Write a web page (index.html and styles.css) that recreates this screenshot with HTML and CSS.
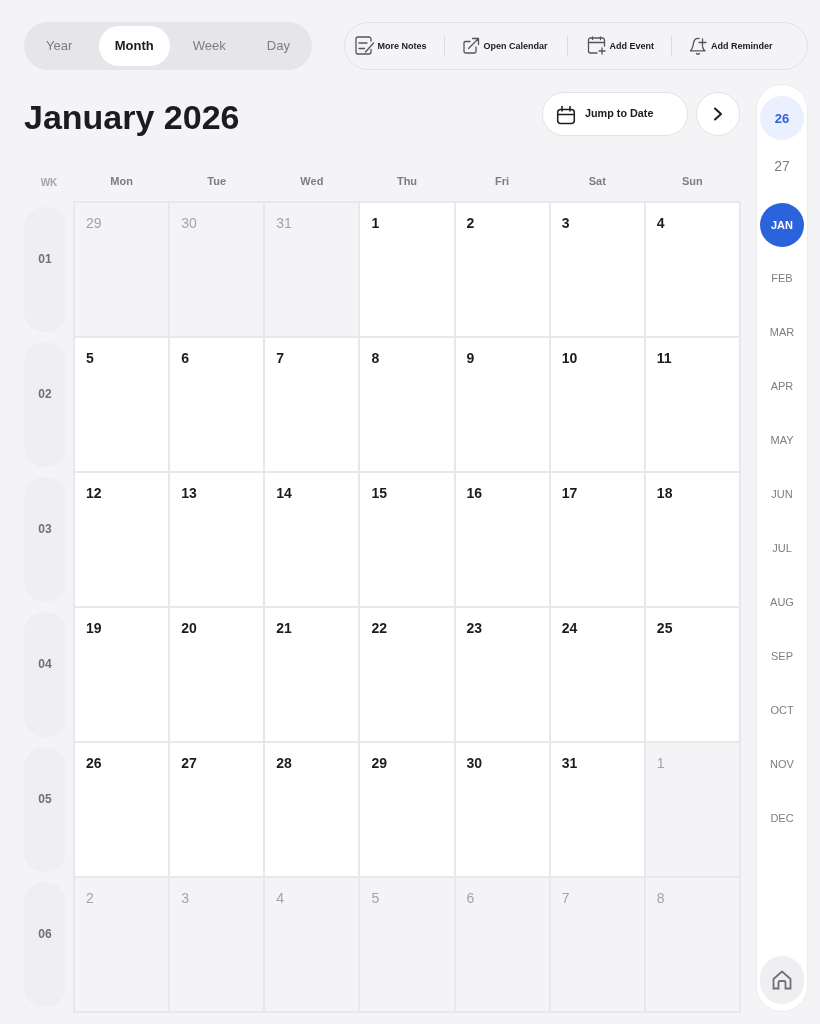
FILE: index.html
```html
<!DOCTYPE html>
<html lang="en">
<head>
<meta charset="utf-8">
<title>January 2026</title>
<link rel="stylesheet" href="styles.css">
</head>
<body>
<div class="page">
  <header class="topbar">
    <nav class="views">
      <span class="view view-year">Year</span>
      <span class="view active">Month</span>
      <span class="view view-week">Week</span>
      <span class="view">Day</span>
    </nav>
    <div class="tools">
      <a class="tool tool-notes">
        <svg class="tool-icon" viewBox="0 0 20 20"><path d="M16 5V3A2 2 0 0 0 14 1H3A2 2 0 0 0 1 3V16A2 2 0 0 0 3 18H14A2 2 0 0 0 16 16V13.500"/><path d="M4 7H12M4 12.500H9.500"/><path d="M10.500 16L18.500 7"/></svg>
        <span>More Notes</span>
      </a>
      <i class="sep"></i>
      <a class="tool tool-open">
        <svg class="tool-icon" viewBox="0 0 20 20"><path d="M9 5.500H4.500A1.500 1.500 0 0 0 3 7V15.500A1.500 1.500 0 0 0 4.500 17H13.500A1.500 1.500 0 0 0 15 15.500V11"/><path d="M7.500 12.500L17.500 2.500M11.500 2.500H17.500V8.500"/></svg>
        <span>Open Calendar</span>
      </a>
      <i class="sep"></i>
      <a class="tool tool-event">
        <svg class="tool-icon" viewBox="0 0 20 20"><path d="M17.500 10V4A2 2 0 0 0 15.500 2H3.500A2 2 0 0 0 1.500 4V15A2 2 0 0 0 3.500 17H10"/><path d="M1.500 6.500H17.500M5.500 0.800V3.500M13.500 0.800V3.500M15 12V18M12 15H18"/></svg>
        <span>Add Event</span>
      </a>
      <i class="sep"></i>
      <a class="tool tool-reminder">
        <svg class="tool-icon" viewBox="0 0 20 20"><path d="M11 2.500C7.500 2 6 4.500 5.500 7C5 10.500 4.500 13 2.500 14.800H17C15.800 14 15 12.800 14.600 11"/><path d="M8.500 17.500C9.300 18.300 10.700 18.300 11.500 17.500"/><path d="M14.500 3V10M11 6.500H18"/></svg>
        <span>Add Reminder</span>
      </a>
    </div>
  </header>

  <div class="body">
    <main class="main">
      <div class="title-row">
        <h1>January 2026</h1>
        <div class="title-actions">
          <button class="jump">
            <svg class="jump-icon" viewBox="0 0 20 20"><rect x="1.700" y="5.500" width="16.600" height="14" rx="3"/><path d="M1.700 10.500H18.300M6 2.500V7M14 2.500V7"/></svg>
            <span>Jump to Date</span>
          </button>
          <button class="next">
            <svg viewBox="0 0 12 16"><path d="M3 2.500L9 8L3 13.500"/></svg>
          </button>
        </div>
      </div>

      <div class="cal">
        <div class="weeks">
          <div class="wk-head">WK</div>
          <div class="wk">01</div>
          <div class="wk">02</div>
          <div class="wk">03</div>
          <div class="wk">04</div>
          <div class="wk">05</div>
          <div class="wk">06</div>
        </div>
        <div class="month">
          <div class="dow"><span>Mon</span><span>Tue</span><span>Wed</span><span>Thu</span><span>Fri</span><span>Sat</span><span>Sun</span></div>
          <div class="grid">
            <div class="day out">29</div><div class="day out">30</div><div class="day out">31</div><div class="day">1</div><div class="day">2</div><div class="day">3</div><div class="day">4</div>
            <div class="day">5</div><div class="day">6</div><div class="day">7</div><div class="day">8</div><div class="day">9</div><div class="day">10</div><div class="day">11</div>
            <div class="day">12</div><div class="day">13</div><div class="day">14</div><div class="day">15</div><div class="day">16</div><div class="day">17</div><div class="day">18</div>
            <div class="day">19</div><div class="day">20</div><div class="day">21</div><div class="day">22</div><div class="day">23</div><div class="day">24</div><div class="day">25</div>
            <div class="day">26</div><div class="day">27</div><div class="day">28</div><div class="day">29</div><div class="day">30</div><div class="day">31</div><div class="day out">1</div>
            <div class="day out">2</div><div class="day out">3</div><div class="day out">4</div><div class="day out">5</div><div class="day out">6</div><div class="day out">7</div><div class="day out">8</div>
          </div>
        </div>
      </div>
    </main>

    <aside class="rail">
      <div class="years">
        <div class="pip year-on">26</div>
        <div class="pip year">27</div>
      </div>
      <div class="months">
        <div class="pip mon-on">JAN</div>
        <div class="pip">FEB</div>
        <div class="pip">MAR</div>
        <div class="pip">APR</div>
        <div class="pip">MAY</div>
        <div class="pip">JUN</div>
        <div class="pip">JUL</div>
        <div class="pip">AUG</div>
        <div class="pip">SEP</div>
        <div class="pip">OCT</div>
        <div class="pip">NOV</div>
        <div class="pip">DEC</div>
      </div>
      <button class="home">
        <svg viewBox="0 0 20 20"><path d="M1.500 9L10 1.500L18.500 9V18.500H13.500V12.500Q13.500 11 12 11H8Q6.500 11 6.500 12.500V18.500H1.500Z"/></svg>
      </button>
    </aside>
  </div>
</div>
</body>
</html>
```
FILE: styles.css
```css
* { box-sizing: border-box; }
html, body { margin: 0; padding: 0; }
body { background: #f4f4f7; font-family: "Liberation Sans", Arial, sans-serif; color: #1c1c1e; }
.page { width: 820px; height: 1024px; padding: 22px 12px 12px 24px; display: flex; flex-direction: column; gap: 14px; overflow: hidden; will-change: transform; }

.topbar { display: flex; justify-content: space-between; height: 48px; flex: none; }
.views { width: 288px; height: 48px; background: #e5e5ea; border-radius: 24px; display: flex; align-items: center; padding: 4px 6px; }
.view { height: 40px; display: flex; align-items: center; padding: 0 16px 1px; font-size: 13px; color: #7d7d82; border-radius: 20px; }
.view-year { margin-right: 10.500px; }
.view-week { margin: 0 9px 0 7px; }
.view.active { background: #fff; color: #1c1c1e; font-weight: 700; }

.tools { width: 464px; height: 48px; border: 1.500px solid #e0e0e5; border-radius: 24px; display: flex; align-items: center; padding-left: 9.500px; }
.tool { display: flex; align-items: center; gap: 3px; font-size: 9px; font-weight: 700; color: #1c1c1e; white-space: nowrap; }
.tool-icon { width: 20px; height: 20px; fill: none; stroke: #555558; stroke-width: 1.300; stroke-linecap: round; stroke-linejoin: round; flex: none; overflow: visible; }
.sep { width: 1px; height: 20px; background: #dcdce0; flex: none; }
.tool-notes { margin-right: 17px; }
.tool-open { margin: 0 19px 0 16px; }
.tool-event { margin: 0 17px 0 19px; }
.tool-reminder { margin-left: 16px; }

.body { flex: 1; display: flex; gap: 15px; min-height: 0; }
.main { width: 717px; display: flex; flex-direction: column; }
.title-row { height: 71px; flex: none; display: flex; justify-content: space-between; padding: 8px 1px 0 0; }
h1 { margin: 1px 0 0; font-size: 34px; line-height: 48px; font-weight: 700; color: #1c1c1e; }
.title-actions { display: flex; gap: 8px; height: 44px; }
button { font-family: inherit; padding: 0; }
.jump { width: 146px; height: 44px; background: #fff; border: 1px solid #e2e2e6; border-radius: 22px; display: flex; align-items: center; gap: 9px; padding-left: 13px; font-size: 10.800px; font-weight: 700; color: #1c1c1e; }
.jump-icon { width: 20px; height: 20px; fill: none; stroke: #1c1c1e; stroke-width: 1.500; stroke-linecap: round; stroke-linejoin: round; overflow: visible; }
.jump span { margin-bottom: 2px; }
.next { width: 44px; height: 44px; background: #fff; border: 1px solid #e2e2e6; border-radius: 22px; display: flex; align-items: center; justify-content: center; }
.next svg { width: 12px; height: 16px; fill: none; stroke: #1c1c1e; stroke-width: 2; stroke-linecap: round; stroke-linejoin: round; }

.cal { display: flex; gap: 7px; flex: none; }
.weeks { width: 42px; display: flex; flex-direction: column; }
.wk-head { height: 52px; padding: 21px 0 0 8px; flex: none; text-align: center; font-size: 10px; line-height: 14px; font-weight: 700; color: #a3a3a8; }
.wk { height: 125px; flex: none; margin-bottom: 10px; padding-bottom: 22px; border-radius: 20px; background: #efeff2; color: #707075; font-size: 12px; font-weight: 700; display: flex; align-items: center; justify-content: center; }
.month { width: 668px; display: flex; flex-direction: column; }
.dow { height: 46px; flex: none; padding: 0 2px; display: grid; grid-template-columns: repeat(7, 1fr); gap: 2px; }
.dow span { text-align: center; font-size: 11px; font-weight: 700; color: #7d7d82; line-height: 14px; padding-top: 19px; }
.grid { width: 668px; height: 812px; flex: none; background: #e8e8ec; padding: 2px; display: grid; grid-template-columns: repeat(7, 1fr); grid-template-rows: repeat(6, 133px); gap: 2px; }
.day { background: #fff; padding: 12px 11px; font-size: 14px; line-height: 16px; font-weight: 700; color: #1c1c1e; }
.day.out { background: #f4f4f7; font-weight: 400; color: #a3a3a8; }

.rail { width: 52px; height: 928px; background: #fff; border: 1px solid #ececf0; border-radius: 26px; padding: 11px 3px 7px; display: flex; flex-direction: column; align-items: center; }
.years { display: flex; flex-direction: column; gap: 4px; margin-bottom: 15px; }
.months { display: flex; flex-direction: column; gap: 10px; flex: 1; }
.pip { width: 44px; height: 44px; border-radius: 50%; display: flex; align-items: center; justify-content: center; font-size: 11px; color: #7d7d82; }
.year { font-size: 14px; }
.year-on { background: #eaf0fd; color: #2a63dc; font-size: 13px; font-weight: 700; }
.mon-on { background: #2a63dc; color: #fff; font-weight: 700; margin-bottom: -1px; }
.home { width: 44px; height: 48px; border-radius: 22px; border: 0; background: #efeff2; display: flex; align-items: center; justify-content: center; }
.home svg { width: 20px; height: 20px; fill: none; stroke: #707075; stroke-width: 1.800; stroke-linejoin: miter; }
```
